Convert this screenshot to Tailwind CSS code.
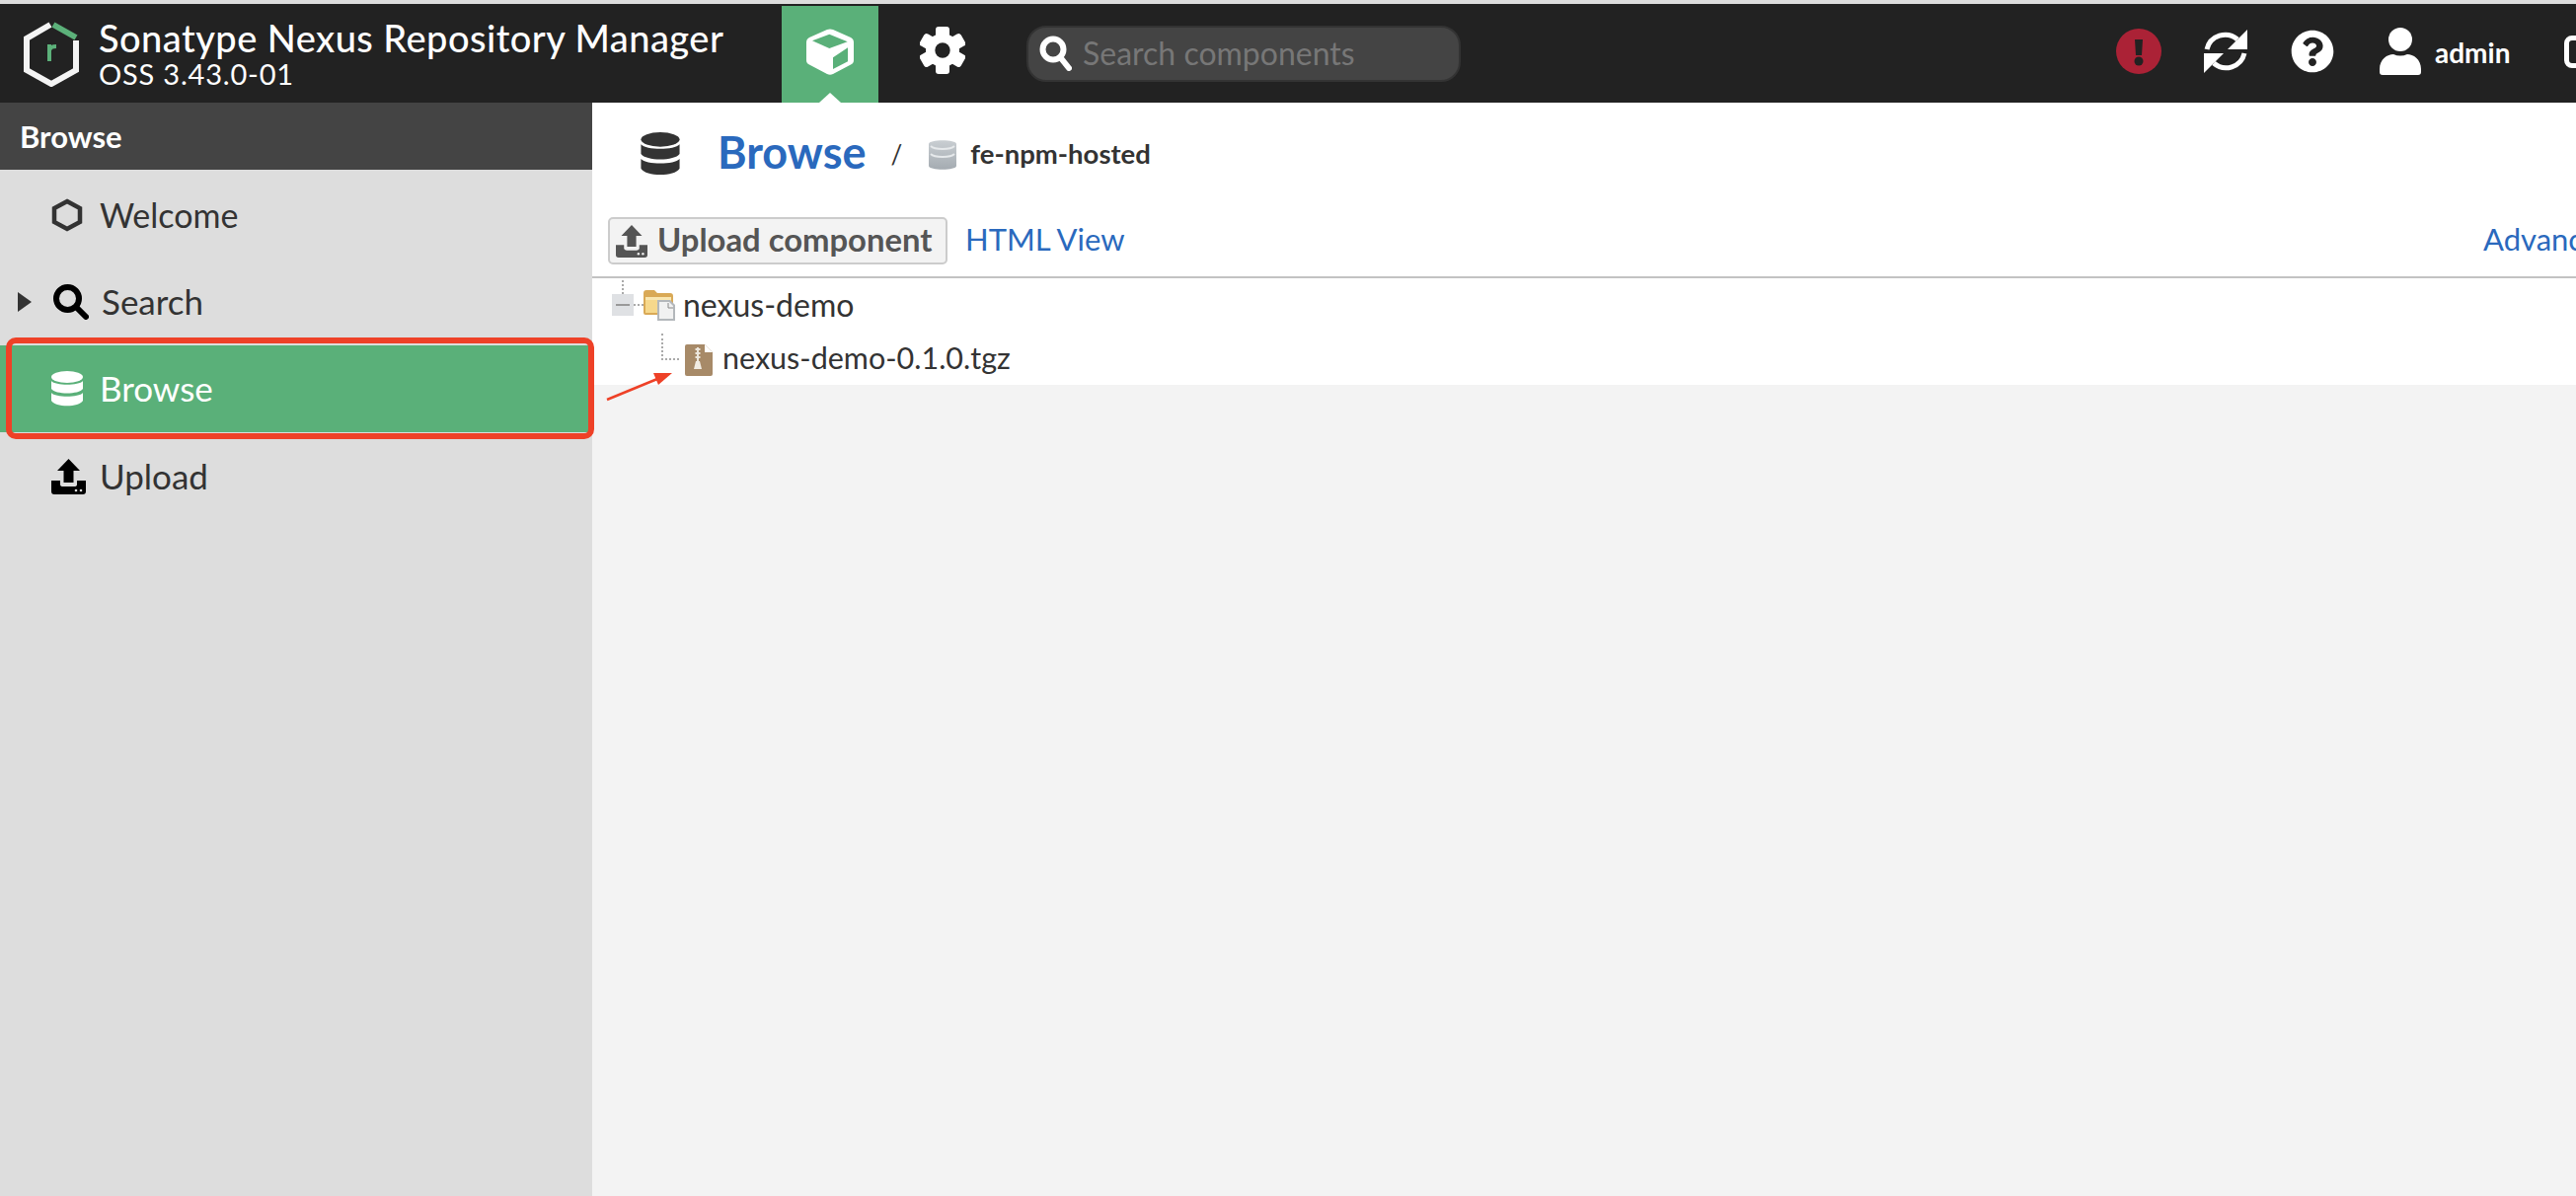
<!DOCTYPE html>
<html lang="en">
<head>
    <meta charset="UTF-8">
    <title>Sonatype Nexus Repository Manager</title>
    <script src="https://cdn.jsdelivr.net/npm/@tailwindcss/browser@4"></script>
</head>
<body class="bg-[#f3f3f3] font-['Lato','Open_Sans',sans-serif] text-[#333] overflow-hidden">
<div class="relative w-[2610px] h-[1212px] overflow-hidden flex flex-col">
    <div class="h-[4px] bg-[#dddddd]"></div>

    <!-- Header -->
    <header class="h-[100px] bg-[#222222] flex items-start text-white">
        <svg class="w-[58px] h-[70px] ml-[23px] mt-[14px]" viewBox="0 0 58 70" fill="none">
            <path d="M28 7 L4 21 V53 L29 67 L54 53 V23" stroke="#f4f4f4" stroke-width="6"/>
            <path d="M31 7 L54 20" stroke="#5cb17a" stroke-width="6"/>
            <path d="M27 44 V27 M27 33 Q28 29 34 29" stroke="#5cb17a" stroke-width="4"/>
        </svg>
        <div class="ml-[19px] mt-[14px] w-[692px]">
            <div class="text-[38px] leading-[40px] font-medium tracking-[0.45px] whitespace-nowrap">Sonatype Nexus Repository Manager</div>
            <div class="text-[29px] leading-[32px] mt-[1px] tracking-[0.8px]">OSS 3.43.0-01</div>
        </div>
        <!-- Nav tiles -->
        <div class="relative mt-[2px] w-[98px] h-[98px] bg-[#5ab079] flex items-center justify-center pb-[6px]">
            <svg class="w-[48px] h-[47px]" viewBox="0 0 48 47">
                <path d="M21 1 Q24 0 27 1 L45 9 Q48 10.500 48 14 V32 Q48 35 45 36.500 L27 46 Q24 47.500 21 46 L3 36.500 Q0 35 0 32 V14 Q0 10.500 3 9 Z" fill="#fff"/>
                <path d="M6 12.300 L23.300 5.700 L41.700 13.300 L23.300 20 Z" fill="#5ab079"/>
                <path d="M27 29.300 L42 19.300 V33.300 L27 41 Z" fill="#5ab079"/>
            </svg>
            <div class="absolute bottom-0 left-[38px] w-0 h-0 border-l-[11px] border-r-[11px] border-b-[10px] border-l-transparent border-r-transparent border-b-white"></div>
        </div>
        <svg class="w-[46px] h-[48px] ml-[42px] mt-[23px]" viewBox="0 0 46 48" fill="#fff">
            <g>
                <rect x="16" y="0" width="14" height="48" rx="3"/>
                <rect x="16" y="0" width="14" height="48" rx="3" transform="rotate(60 23 24)"/>
                <rect x="16" y="0" width="14" height="48" rx="3" transform="rotate(120 23 24)"/>
            </g>
            <circle cx="23" cy="24" r="17"/>
            <circle cx="23" cy="24" r="7.700" fill="#222222"/>
        </svg>
        <div class="ml-[62px] mt-[22px] w-[440px] h-[57px] rounded-[20px] bg-[#444444] border-2 border-[#333333] flex items-center pl-[11px] pb-[2px]">
            <svg class="w-[33px] h-[36px]" viewBox="0 0 33 36" fill="none" stroke="#fff">
                <circle cx="14" cy="14" r="10.500" stroke-width="6"/>
                <path d="M22 23 L30 33" stroke-width="6" stroke-linecap="round"/>
            </svg>
            <span class="ml-[11px] text-[32px] text-[#777777]">Search components</span>
        </div>
        <div class="ml-auto flex items-center h-[100px] pb-[4px]">
            <svg class="w-[46px] h-[46px]" viewBox="0 0 46 46">
                <circle cx="23" cy="23" r="23" fill="#ab2236"/>
                <path d="M19 11 H27 L26 27 H20 Z" fill="#222222"/>
                <circle cx="23" cy="33" r="4.500" fill="#222222"/>
            </svg>
            <svg class="w-[44px] h-[44px] ml-[43px]" viewBox="0 0 44 44" fill="none">
                <path d="M3 20 A19 19 0 0 1 34 10 M41 24 A19 19 0 0 1 10 34" stroke="#fff" stroke-width="5"/>
                <path d="M44 0 V20 H24 Z M0 44 V24 H20 Z" fill="#fff"/>
            </svg>
            <svg class="w-[44px] h-[44px] ml-[44px]" viewBox="0 0 512 512" fill="#fff">
                <path d="M504 256c0 136.997-111.043 248-248 248S8 392.997 8 256C8 119.083 119.043 8 256 8s248 111.083 248 248zM262.655 90c-54.497 0-89.255 22.957-116.549 63.758-3.536 5.286-2.353 12.415 2.715 16.258l34.699 26.31c5.205 3.947 12.621 3.008 16.665-2.122 17.864-22.658 30.113-35.797 57.303-35.797 20.429 0 45.698 13.148 45.698 32.958 0 14.976-12.363 22.667-32.534 33.976C247.128 238.528 216 254.941 216 296v4c0 6.627 5.373 12 12 12h56c6.627 0 12-5.373 12-12v-1.333c0-28.462 83.186-29.647 83.186-106.667 0-58.002-60.165-102-116.531-102zM256 338c-25.365 0-46 20.635-46 46 0 25.364 20.635 46 46 46s46-20.636 46-46c0-25.365-20.635-46-46-46z"/>
            </svg>
            <svg class="w-[42px] h-[48px] ml-[46px]" viewBox="0 0 42 48" fill="#fff">
                <ellipse cx="21" cy="12" rx="12" ry="12"/>
                <path d="M0 42 C0 32 8 27 14 27 Q21 30 28 27 C34 27 42 32 42 42 V45 Q42 48 39 48 H3 Q0 48 0 45 Z"/>
            </svg>
            <span class="ml-[14px] text-[28px] font-bold w-[131px] mt-[2px]">admin</span>
            <div class="w-[30px] h-[33px] border-[5px] border-white rounded-[8px] flex-none mr-[-18px]"></div>
        </div>
    </header>

    <div class="flex flex-1 min-h-0">
        <!-- Sidebar -->
        <aside class="w-[600px] bg-[#dddddd] flex flex-col flex-none">
            <div class="h-[68px] bg-[#444444] text-white text-[31px] font-bold flex items-center pl-[20px]">Browse</div>
            <div class="h-[44px] mt-[24px] flex items-center pl-[52px] text-[34px]">
                <svg class="w-[32px] h-[34px]" viewBox="0 0 32 34" fill="none">
                    <path d="M16 3 L29 10 V24 L16 31 L3 24 V10 Z" stroke="#333" stroke-width="4.500"/>
                </svg>
                <span class="ml-[17px] mt-[-2px]">Welcome</span>
            </div>
            <div class="h-[44px] mt-[44px] flex items-center pl-[18px] text-[35px]">
                <svg class="w-[14px] h-[20px]" viewBox="0 0 14 20"><path d="M0 0 L14 10 L0 20 Z" fill="#333"/></svg>
                <svg class="w-[36px] h-[36px] ml-[22px]" viewBox="0 0 36 36" fill="none" stroke="#000">
                    <circle cx="14.500" cy="14.500" r="11.500" stroke-width="6"/>
                    <path d="M24 24 L33 33" stroke-width="6" stroke-linecap="round"/>
                </svg>
                <span class="ml-[13px] mt-[-2px]">Search</span>
            </div>
            <div class="h-[88px] mt-[22px] bg-[#5ab079] text-white flex items-center pl-[52px] text-[35px]">
                <svg class="w-[32px] h-[36px]" viewBox="0 0 32 36" fill="#fff">
                    <ellipse cx="16" cy="6" rx="16" ry="6"/>
                    <path d="M0 10 C4 15 28 15 32 10 V18 C28 24 4 24 0 18 Z"/>
                    <path d="M0 22 C4 27 28 27 32 22 V30 C28 37 4 37 0 30 Z"/>
                </svg>
                <span class="ml-[17px] mt-[-2px]">Browse</span>
            </div>
            <div class="h-[44px] mt-[23px] flex items-center pl-[52px] text-[35px]">
                <svg class="w-[35px] h-[36px]" viewBox="0 0 35 36" fill="#000">
                    <path d="M17.500 0 L29 12 H22.500 V24 H12.500 V12 H6 Z"/>
                    <path d="M0 22 H9 V26 Q9 28 12 28 H23 Q26 28 26 26 V22 H35 V33 Q35 36 32 36 H3 Q0 36 0 33 Z"/>
                    <circle cx="25" cy="32" r="1.300" fill="#ddd"/><circle cx="30" cy="32" r="1.300" fill="#ddd"/>
                </svg>
                <span class="ml-[14px] mt-[-2px]">Upload</span>
            </div>
        </aside>

        <!-- Content -->
        <main class="flex-1 min-w-0 flex flex-col">
            <div class="bg-white h-[286px] flex flex-col flex-none">
                <div class="h-[108px] flex items-center flex-none pb-[4px]">
                    <svg class="w-[40px] h-[44px] ml-[49px]" viewBox="0 0 32 36" fill="#333">
                        <ellipse cx="16" cy="6" rx="16" ry="6"/>
                        <path d="M0 10 C4 15 28 15 32 10 V18 C28 24 4 24 0 18 Z"/>
                        <path d="M0 22 C4 27 28 27 32 22 V30 C28 37 4 37 0 30 Z"/>
                    </svg>
                    <span class="ml-[38px] mt-[-2px] text-[45px] font-bold text-[#2a69bd]">Browse</span>
                    <span class="ml-[25px] text-[26px]">/</span>
                    <svg class="w-[28px] h-[32px] ml-[27px] mt-[2px]" viewBox="0 0 28 32">
                        <defs>
                            <linearGradient id="dbGrey" x1="0" y1="0" x2="0" y2="1">
                                <stop offset="0" stop-color="#c9ced2"/>
                                <stop offset="1" stop-color="#a4abb1"/>
                            </linearGradient>
                        </defs>
                        <path d="M0 5 C0 0 28 0 28 5 V27 C28 32 0 32 0 27 Z" fill="url(#dbGrey)"/>
                        <path d="M2 15 C6 19 22 19 26 15" stroke="#e6e9eb" stroke-width="2" fill="none"/>
                        <path d="M2 7 C6 11 22 11 26 7" stroke="#e6e9eb" stroke-width="2" fill="none"/>
                    </svg>
                    <span class="ml-[14px] text-[27.500px] font-bold">fe-npm-hosted</span>
                </div>
                <div class="h-[70px] border-b-2 border-[#c2c2c2] flex-none flex items-start pl-[16px] relative">
                    <div class="w-[344px] h-[48px] mt-[8px] bg-[#f3f3f3] border-2 border-[#cccccc] rounded-[5px] flex items-center pl-[6px] text-[#555555]">
                        <svg class="w-[32px] h-[33px]" viewBox="0 0 35 36" fill="#555555">
                            <path d="M17.500 0 L29 12 H22.500 V24 H12.500 V12 H6 Z"/>
                            <path d="M0 22 H9 V26 Q9 28 12 28 H23 Q26 28 26 26 V22 H35 V33 Q35 36 32 36 H3 Q0 36 0 33 Z"/>
                            <circle cx="25" cy="32" r="1.300" fill="#f3f3f3"/><circle cx="30" cy="32" r="1.300" fill="#f3f3f3"/>
                        </svg>
                        <span class="ml-[10px] mt-[-3px] text-[32.800px] font-bold whitespace-nowrap">Upload component</span>
                    </div>
                    <span class="ml-[18px] mt-[7px] text-[31px] text-[#2a69bd]">HTML View</span>
                    <span class="absolute left-[1916px] top-[7px] text-[31px] text-[#2a69bd] whitespace-nowrap">Advanced search</span>
                </div>
                <div class="h-[108px] flex-none">
                    <div class="flex items-center h-[54px] pl-[20px] relative text-[32px]">
                        <div class="absolute left-[30px] top-[2px] h-[14px] border-l-2 border-dotted border-[#aaaaaa]"></div>
                        <div class="w-[22px] h-[22px] bg-[#dfe1e4] flex items-center justify-center">
                            <div class="w-[14px] h-[2px] bg-[#999999]"></div>
                        </div>
                        <div class="w-[10px] border-t-2 border-dotted border-[#aaaaaa]"></div>
                        <svg class="w-[32px] h-[32px]" viewBox="0 0 32 32">
                            <path d="M0 4 Q0 1 3 1 H11 L14 4 H27 Q30 4 30 7 V26 H2 Q0 26 0 24 Z" fill="#d9a956"/>
                            <path d="M2 8 H28 V11 H2 Z" fill="#f9e6b0"/>
                            <path d="M2 11 H28 V24 H2 Z" fill="#f6d88c"/>
                            <path d="M14 11 H27 L32 16 V32 H14 Z" fill="#b3b7bb"/>
                            <path d="M16 13 H26 L30 17 V30 H16 Z" fill="#f1f1f1"/>
                            <path d="M25 14 V19 H30" stroke="#888888" stroke-width="1" fill="none"/>
                        </svg>
                        <span class="ml-[8px]">nexus-demo</span>
                    </div>
                    <div class="flex items-start h-[54px] pl-[70px] text-[30.500px]">
                        <div class="w-[18px] h-[27px] mt-[2px] border-l-2 border-b-2 border-dotted border-[#aaaaaa]"></div>
                        <svg class="w-[28px] h-[32px] ml-[6px] mt-[13px]" viewBox="0 0 28 32">
                            <path d="M2 0 H20 L28 8 V30 Q28 32 26 32 H2 Q0 32 0 30 V2 Q0 0 2 0 Z" fill="#a78a68"/>
                            <path d="M20 0 L28 8 H20 Z" fill="#ffffff"/>
                            <path d="M13 3 V18 M10.500 5 H15.500 M10.500 9 H15.500 M10.500 13 H15.500" stroke="#ece6dc" stroke-width="2"/>
                            <path d="M11 17 H15 L17 25 H9 Z" fill="#f1ece3"/>
                        </svg>
                        <span class="ml-[10px] mt-[4px]">nexus-demo-0.1.0.tgz</span>
                    </div>
                </div>
            </div>
        </main>
    </div>

    <!-- Annotation overlays -->
    <div class="absolute left-[6px] top-[342px] w-[596px] h-[103px] border-[6px] border-[#ee4127] rounded-[10px]"></div>
    <svg class="absolute left-[610px] top-[370px] w-[80px] h-[40px]" viewBox="0 0 80 40">
        <path d="M5 35 L56 14" stroke="#ee4127" stroke-width="2.500"/>
        <path d="M71 8 L52 8 L57 20 Z" fill="#ee4127"/>
    </svg>
</div>
</body>
</html>
